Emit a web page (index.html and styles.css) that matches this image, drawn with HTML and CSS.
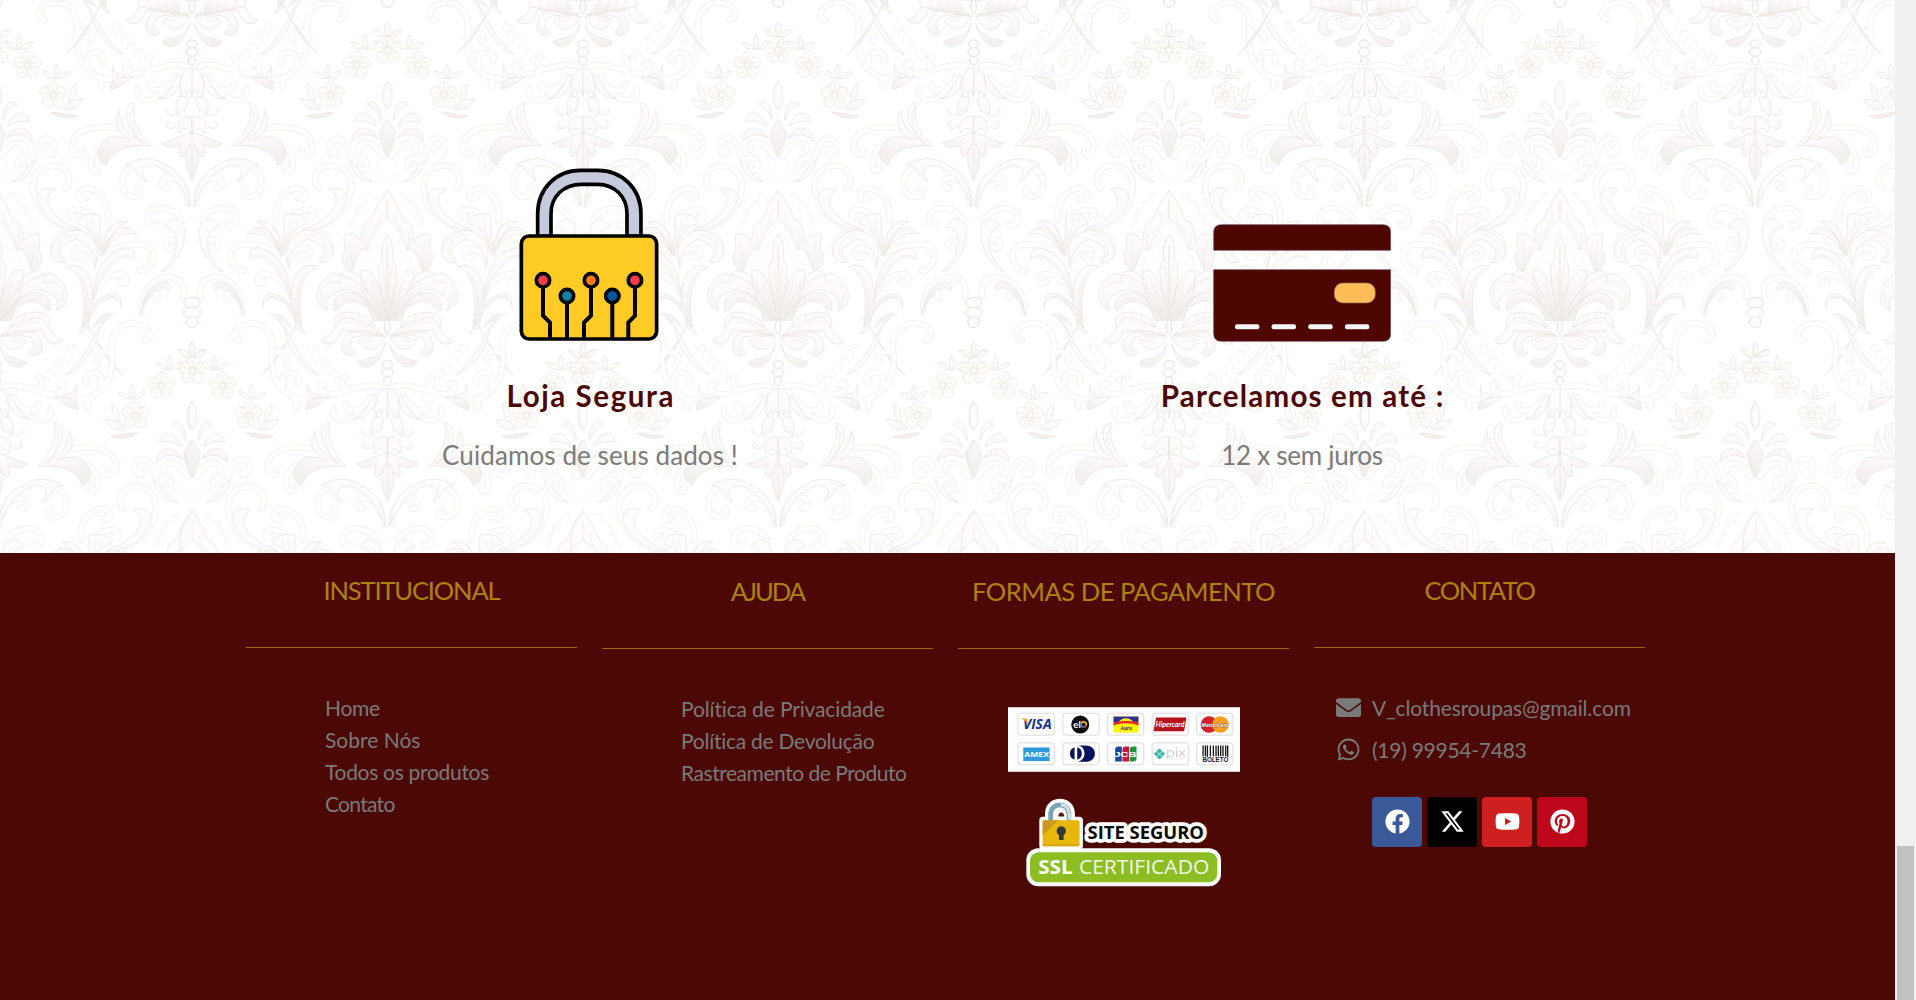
FILE: index.html
```html
<!DOCTYPE html>
<html lang="pt-BR">
<head>
<meta charset="utf-8">
<title>V Clothes</title>
<link rel="stylesheet" href="styles.css">
</head>
<body>
<div class="page">
<section class="features">
  <svg class="damask" aria-hidden="true">
    <defs>
      <linearGradient id="shade" x1="0" y1="0" x2="0.3" y2="1"><stop offset="0" stop-color="#fefdfb"/><stop offset="0.6" stop-color="#fdfcfa"/><stop offset="1" stop-color="#f3f0ee"/></linearGradient>
      <g id="flower">
        <g fill="#fefdfa" stroke="#ece8e4" stroke-width="2.5">
          <circle cx="0" cy="-25" r="16"/><circle cx="24" cy="-8" r="16"/><circle cx="15" cy="21" r="16"/><circle cx="-15" cy="21" r="16"/><circle cx="-24" cy="-8" r="16"/>
          <circle r="8"/><path d="M0-8V-30M8-3L28-9M5 6L17 24M-5 6L-17 24M-8-3L-28-9"/>
        </g>
      </g>
      <g id="sprig" fill="#fefdfa" stroke="#e8e3df" stroke-width="2.5"><path d="M0 0C-12-15-6-32 0-42C6-32 12-15 0 0ZM-5 2C-14-16-30-20-42-18C-36-4-22 2-5 2ZM5 2C14-16 26-20 38-22C34-6 20 4 5 2Z"/></g>
      <g id="curls">
        <path d="M365 105C352 40 390 5 430 8C480 14 490 54 460 60M365 130C372 100 350 88 330 97C315 103 313 118 322 126M265 240C325 232 362 190 364 130M330 196C340 168 322 152 300 158C280 166 280 180 288 184M140 210C180 230 222 222 220 196C218 184 206 186 206 194M40 198C90 185 120 215 142 205C160 190 156 172 142 170M70 230C90 280 150 280 144 250M100 270C120 310 190 310 180 265M262 236C290 232 300 255 288 262"/>
        <path d="M245 385C330 370 378 400 378 440C376 470 345 470 349 449M285 430C315 450 325 470 320 495C322 515 295 520 300 500M180 495C235 505 245 585 195 590C170 592 168 570 180 566M30 610C30 550 60 535 95 532C118 545 105 575 90 562M50 665C55 625 150 600 152 660C150 680 128 682 124 672M56 740C58 715 98 710 96 736C94 750 82 748 80 742M45 890C30 830 90 825 110 835C150 850 170 890 170 935M122 895C120 870 145 870 165 905M270 660C265 580 325 555 350 570C370 590 350 605 338 595M318 650C350 620 390 625 384 648C378 655 370 650 370 646M398 565C370 530 405 490 440 498C490 500 505 550 490 590C475 650 410 685 360 690M360 698C420 690 445 730 430 765C420 780 405 780 405 780M310 780C320 745 375 730 372 762C368 775 350 775 348 768M175 810C160 820 130 790 136 755C145 725 215 725 285 760M235 845C225 855 210 850 216 830C230 810 290 830 312 880M435 460C455 470 460 455 450 450C425 460 420 415 460 415C480 420 490 460 505 495M505 495C505 465 545 465 543 500C540 520 520 510 520 500M520 450C510 425 560 410 590 470"/>
      </g>
      <g id="leaves">
        <path d="M30 45C60 15 110-5 150-10C175 10 180 50 216 60C205 80 165 75 155 30ZM30 45C80 25 140 20 155 70C160 110 120 115 115 95C130 90 140 70 120 50C80 42 60 42 30 45ZM25 50C50 100 90 95 105 60C80 45 50 45 25 50ZM25 70C40 120 80 110 108 125C95 150 45 150 25 70Z"/>
        <path d="M350-5C310 20 310 90 225 163C260 155 310 95 320 50C325 20 340 10 350-5ZM298-5C290 15 275 25 263 40C280 38 295 20 298-5ZM350 958C310 983 310 1053 225 1126"/>
        <path d="M195 232C230 225 270 240 262 268C240 265 215 245 195 232ZM225 222C240 225 258 210 255 195C265 230 240 240 215 232Z"/>
        <path d="M142 438C175 410 205 350 190 308C230 310 225 380 165 430C210 400 240 370 235 330C255 365 245 400 200 420C240 405 275 405 285 430C310 450 300 490 275 495C260 450 215 430 142 438Z"/>
        <path d="M100 495C130 470 180 470 218 495C185 490 180 540 155 545C185 505 155 490 120 500C70 520 45 570 24 620C28 560 45 515 100 495Z"/>
        <path d="M105 813C60 790 35 730 40 680C55 650 85 650 100 682C55 680 45 760 110 813ZM172 945C170 890 140 850 110 848C85 842 75 860 88 872C105 850 150 870 172 945Z"/>
        <path d="M185 702C200 675 260 660 285 765C255 705 215 695 185 702ZM215 665C255 655 275 690 285 740C300 700 290 670 296 645C330 635 365 650 360 672C320 680 300 730 292 768C270 730 250 680 215 665Z"/>
        <path d="M310 805C295 750 300 710 360 690C410 690 445 730 440 760C435 785 415 790 400 785C430 760 400 725 365 718C325 730 305 770 310 805ZM192 778C185 755 200 740 225 745C280 765 312 815 315 900C285 800 225 750 192 778ZM318 915C305 840 340 780 395 800C350 820 330 870 348 985C320 950 325 940 290 905C260 880 225 900 232 925C225 870 260 865 318 915Z"/>
        <path d="M430 568C460 555 490 575 482 600C470 650 420 690 350 692C410 670 490 610 430 568ZM510 495C520 520 545 540 560 545C525 545 495 515 490 480ZM250 943C290 935 305 965 318 985"/>
        <path d="M603 573C625 600 635 620 640 650V690L603 655C575 680 555 710 545 750C530 735 515 760 500 810C480 820 465 780 470 760C485 765 470 700 478 702C500 700 520 710 525 725C528 690 535 660 550 665C570 640 560 630 603 573Z"/>
        <path d="M585 360C585 320 565 290 542 313C565 320 575 335 585 360ZM570 378C560 340 515 320 507 365C530 360 550 365 570 378ZM575 415C550 370 500 375 497 425C515 405 545 395 575 415ZM603 245C620 265 620 310 603 328C586 310 586 265 603 245ZM603 360L626 400C620 440 610 450 603 470C596 450 586 440 580 400Z"/>
        <path d="M425 930C380 920 380 850 440 820C500 830 545 850 600 965C540 900 500 860 470 870C420 890 415 900 425 930ZM445 930C430 890 480 865 520 885C560 910 575 940 590 965C540 900 480 890 465 920ZM560 960C540 890 520 850 525 810C560 800 590 860 600 960ZM603 705C615 720 620 750 615 780C640 800 625 850 603 960C580 850 565 800 590 780C585 750 590 720 603 705ZM465 850C440 800 530 790 545 880"/>
        <path d="M18 205C45 200 60 240 52 290C45 275 40 250 35 285C30 270 28 250 18 290ZM60 225C75 245 85 290 120 295C95 300 55 280 50 230ZM30 295C60 270 75 320 60 350C50 340 45 320 40 335ZM20 350C45 340 70 370 55 400C45 380 30 380 20 400ZM20 400C60 405 70 420 110 430C90 450 60 440 50 430C60 450 60 470 45 470C35 450 25 440 20 420ZM18 430C40 445 45 490 18 540ZM55 330C75 360 100 345 96 325M65 380C100 400 100 365 85 362"/>
        <path d="M345 298C370 295 400 310 405 325C380 335 355 325 345 298ZM365 250C385 265 390 290 385 305C370 300 362 270 365 250ZM362 347C390 350 410 335 442 338C420 350 390 362 362 347Z"/>
        <path d="M445 980C430 930 500 925 545 955C570 975 570 990 560 1000Z"/>
      </g>
      <g id="motif" stroke-linejoin="round" stroke-linecap="round">
        <use href="#curls" fill="none" stroke="#f1eeeb" stroke-width="19"/>
        <use href="#curls" fill="none" stroke="#fefefc" stroke-width="14.5"/>
        <use href="#leaves" fill="url(#shade)" stroke="#e9e5e1" stroke-width="2.5"/>
        <g fill="none" stroke="#f1ece7" stroke-width="2.5">
          <path d="M150 178C160 160 180 165 175 185M165 160C175 140 195 150 190 170M188 138C198 118 218 130 212 148M205 118C215 98 233 110 228 128M220 98C230 80 247 90 243 108M235 80C245 62 262 72 256 90M500 680C490 670 500 655 510 665M505 655C500 640 512 630 520 645M515 635C510 620 522 612 530 625M525 615C525 600 540 595 543 608M545 595C545 575 565 575 565 590"/>
          <path d="M45 45C80 30 120 20 145 40M60 50C80 70 90 65 95 58M65 30C100 10 130 0 150 5M55 120C70 130 85 132 98 128M195 325C215 350 200 395 165 428M225 350C235 370 220 400 190 420M180 440C220 440 250 450 270 480M260 675C275 690 285 720 287 750M310 660C330 655 300 710 292 750M330 655C350 660 310 700 295 755M205 690C230 685 260 705 280 745M205 765C240 760 290 800 310 870M365 815C335 840 325 890 335 950M245 890C270 885 300 905 315 925M370 705C405 705 425 735 420 765M410 900C390 860 430 840 460 845M460 905C480 885 520 900 560 945M560 850L590 940M603 740V950M590 800C600 840 598 880 603 940M615 800C606 840 606 880 603 940M603 600V655M580 640C590 660 570 680 555 700M540 700C535 720 540 735 545 745M490 720L500 795"/>
          <path d="M450 930C470 940 475 970 480 990M490 935C500 950 505 970 505 990M520 945L530 990"/>
        </g>
        <g fill="none" stroke="#eee9e4" stroke-width="3" stroke-dasharray="0 11"><path d="M585 690L540 760L510 830M590 705L555 760L520 800M510 760V800M560 790L530 770M575 730V770M500 820L480 840M555 505L600 545M560 520H600M575 490V540"/></g>
        <g fill="#fefdfb" stroke="#e6e1dc" stroke-width="2.5"><ellipse cx="18" cy="132" rx="15" ry="12"/><ellipse cx="18" cy="156" rx="17" ry="13"/><ellipse cx="18" cy="182" rx="11" ry="13"/><ellipse cx="18" cy="908" rx="24" ry="16"/><ellipse cx="18" cy="938" rx="26" ry="16"/><ellipse cx="18" cy="966" rx="17" ry="17"/><ellipse cx="18" cy="20" rx="8" ry="22"/></g>
        <use href="#flower" x="603" y="150"/><use href="#flower" x="512" y="195"/><use href="#flower" x="435" y="285"/>
        <use href="#sprig" x="603" y="108"/><use href="#sprig" x="538" y="146"/><use href="#sprig" x="425" y="234"/>
      </g>
      <g id="pair">
        <use href="#motif" transform="scale(.3333) translate(-18 0)"/>
        <use href="#motif" transform="scale(-.3333 .3333) translate(-18 0)"/>
      </g>
      <pattern id="wallpaper" width="390.8" height="640.8" patternUnits="userSpaceOnUse" patternTransform="translate(-3.4 0)">
        <use href="#pair" x="195.4"/>
        <use href="#pair" x="0" y="320.4"/><use href="#pair" x="390.8" y="320.4"/>
        <use href="#pair" x="0" y="-320.4"/><use href="#pair" x="390.8" y="-320.4"/>
        <use href="#pair" x="195.4" y="640.8"/>
      </pattern>
    </defs>
    <rect width="100%" height="100%" fill="url(#wallpaper)"/>
  </svg>
  <div class="feature">
    <svg class="lock" viewBox="110 50 430 525" stroke="#000" stroke-width="11">
      <path d="M172 258V190C172 115 228 60 300 60H352C425 60 482 115 482 190V258H440V190C440 138 402 102 352 102H303C250 102 212 138 212 190V258Z" fill="#c5cadd"/>
      <rect x="123" y="257" width="406" height="309" rx="23" fill="#ffcb24"/>
      <path d="M188 412V496L209 517V566M260 460V566M332 412V496L311 517V566M396 460V566M464 412V496L444 517V566" fill="none" stroke-width="12"/>
      <circle cx="188" cy="390" r="20" fill="#ff3c4c"/><circle cx="260" cy="437" r="20" fill="#14829e"/><circle cx="332" cy="390" r="20" fill="#ff7b1c"/><circle cx="396" cy="437" r="20" fill="#00599c"/><circle cx="464" cy="390" r="20" fill="#ff3c4c"/>
    </svg>
    <h2><span class="track-wide">Loja Segura</span></h2>
    <p><span class="track-loose">Cuidamos de seus dados !</span></p>
  </div>
  <div class="feature">
    <svg class="card" viewBox="218 -101 535 525">
      <g fill="#4f0600" stroke="#604a5a" stroke-width="2"><path d="M220 149V95Q220 72 243 72H728Q751 72 751 95V149ZM220 207H751V399Q751 422 728 422H243Q220 422 220 399Z"/></g>
      <rect x="582" y="247" width="123" height="60" rx="25" fill="#ffbd57" stroke="#8b6a50" stroke-width="2"/>
      <g fill="#f4f4f6"><rect x="284" y="371" width="73" height="15" rx="6"/><rect x="394" y="371" width="73" height="15" rx="6"/><rect x="504" y="371" width="73" height="15" rx="6"/><rect x="614" y="371" width="73" height="15" rx="6"/></g>
    </svg>
    <h2><span class="track-mid">Parcelamos em até :</span></h2>
    <p><span class="track-snug">12 x sem juros</span></p>
  </div>
</section>
<footer class="footer">
  <div class="col">
    <h3><span class="title-institutional">INSTITUCIONAL</span></h3>
    <ul class="links"><li><span class="track-snug">Home</span></li><li>Sobre Nós</li><li><span class="track-tight">Todos os produtos</span></li><li><span class="track-tighter">Contato</span></li></ul>
  </div>
  <div class="col low">
    <h3><span class="title-help">AJUDA</span></h3>
    <ul class="links"><li><span class="track-hair">Política de Privacidade</span></li><li><span class="track-snug">Política de Devolução</span></li><li><span class="track-close">Rastreamento de Produto</span></li></ul>
  </div>
  <div class="col low">
    <h3><span class="track-close">FORMAS DE PAGAMENTO</span></h3>
    <svg class="payments" viewBox="52 50 697 194">
      <rect x="52" y="50" width="697" height="194" fill="#fff"/>
      <g fill="#fff" stroke="#d3d3d6" stroke-width="2.5"><rect x="82" y="68" width="109" height="66" rx="9"/><rect x="217" y="68" width="109" height="66" rx="9"/><rect x="351" y="68" width="109" height="66" rx="9"/><rect x="485" y="68" width="109" height="66" rx="9"/><rect x="619" y="68" width="109" height="66" rx="9"/><rect x="82" y="157" width="109" height="66" rx="9"/><rect x="217" y="157" width="109" height="66" rx="9"/><rect x="351" y="157" width="109" height="66" rx="9"/><rect x="485" y="157" width="109" height="66" rx="9"/><rect x="619" y="157" width="109" height="66" rx="9"/></g>
      <text x="97" y="115" class="visa" textLength="86" lengthAdjust="spacingAndGlyphs">VISA</text><path d="M91 84H108L113 102C107 93 100 88 91 84Z" fill="#f5a21b"/>
      <circle cx="269" cy="102" r="27" fill="#0b0b12"/><text x="248" y="111" class="elo">el</text>
      <g fill="none" stroke-width="5"><path d="M272 99A8 8 0 0 1 280 94" stroke="#ffcb05"/><path d="M280 94A8 8 0 0 1 287 104" stroke="#ffcb05"/><path d="M287 104A8 8 0 0 1 279 110" stroke="#ef4123"/><path d="M272 99A8 8 0 0 0 279 110" stroke="#00a4e0"/></g>
      <rect x="369" y="78" width="75" height="48" fill="#fff200"/><path d="M369 78H444V96H369Z" fill="#2c2f9b"/><path d="M383 98C390 78 423 78 430 98Z" fill="#ffe600"/><path d="M369 96C390 90 423 90 444 96V105C420 96 393 96 369 105Z" fill="#e52a26"/><text x="407" y="118" class="aura">Aura</text>
      <path d="M497 81H588L581 122H489Z" fill="#b5121b"/><text x="496" y="108" class="hiper" textLength="86" lengthAdjust="spacingAndGlyphs">Hipercard</text>
      <circle cx="656" cy="102" r="25" fill="#d5202a"/><circle cx="690" cy="102" r="25" fill="#f99f1f"/><text x="633" y="108" class="master" textLength="81" lengthAdjust="spacingAndGlyphs">MasterCard</text>
      <rect x="98" y="171" width="79" height="41" fill="#2d9bdb"/><text x="101" y="200" class="amex" textLength="74" lengthAdjust="spacingAndGlyphs">AMEX</text>
      <path d="M256 165H286C322 165 322 214 286 214H256Z" fill="#02145c"/><circle cx="256" cy="189" r="26" fill="#fff"/><path d="M252 170A20 20 0 0 0 252 208ZM260 170A20 20 0 0 1 260 208Z" fill="#02145c"/>
      <path d="M374 178Q374 168 384 168H394V213H374Z" fill="#17489f"/><path d="M396 178Q396 168 406 168H416V213H396Z" fill="#c31a3c"/><path d="M418 178Q418 168 428 168H438V203Q438 213 428 213H418Z" fill="#1b9638"/><text x="371" y="199" class="jcb" textLength="67" lengthAdjust="spacingAndGlyphs">JCB</text>
      <path d="M507 175L522 190L507 206L492 190Z" fill="#35b9ab" stroke="#35b9ab" stroke-width="3" stroke-linejoin="round"/><path d="M498 182L507 190L516 182M498 199L507 190L516 199" fill="none" stroke="#fff" stroke-width="2"/><text x="527" y="199" class="pix" textLength="59" lengthAdjust="spacingAndGlyphs">pix</text><path d="M536 205H583" stroke="#d2d2d2" stroke-width="2" stroke-dasharray="3 2"/>
      <path d="M638 165V200M645 165V200M651 165V200M660 165V200M669 165V200M677 165V200M684 165V200M691 165V200M698 165V200M706 165V200M712 165V200" stroke="#17171f" stroke-width="4"/><text x="636" y="216" class="boleto" textLength="78" lengthAdjust="spacingAndGlyphs">BOLETO</text>
    </svg>
    <svg class="ssl" viewBox="104 320 592 270">
      <g fill="#fff" stroke="#fff" stroke-width="22" stroke-linejoin="round"><path d="M158 390H175V370C175 325 243 325 243 370V390H267V467H158Z"/></g>
      <text x="292" y="446" class="site" textLength="350" lengthAdjust="spacingAndGlyphs">SITE SEGURO</text>
      <rect x="108" y="474" width="585" height="114" rx="36" fill="#fff"/><rect x="119" y="486" width="563" height="90" rx="26" fill="#8cbd22"/>
      <path d="M181 392V372C181 334 236 334 236 372V392" fill="none" stroke="#79a4b2" stroke-width="14"/><path d="M212 343C230 344 238 356 238 388" fill="none" stroke="#d5e2e6" stroke-width="9"/>
      <path d="M198 392V374C198 358 228 358 228 374V392Z" fill="#fff"/><path d="M204 378C204 362 222 362 222 378Z" fill="#4c1a16"/>
      <rect x="157" y="390" width="111" height="78" rx="6" fill="#e8b70b"/><path d="M157 396Q157 390 163 390H205L157 435Z" fill="#c79a20"/><path d="M157 461V466Q158 468 163 468H262Q268 468 268 461Z" fill="#d9a90b"/>
      <path d="M213 408A14 14 0 0 1 220 434V449H206V434A14 14 0 0 1 213 408Z" fill="#363636"/>
      <text x="144" y="552" class="sslb" textLength="103" lengthAdjust="spacingAndGlyphs">SSL</text><text x="266" y="552" class="cert" textLength="392" lengthAdjust="spacingAndGlyphs">CERTIFICADO</text>
    </svg>
  </div>
  <div class="col">
    <h3><span class="title-contact">CONTATO</span></h3>
    <ul class="contact">
      <li><svg viewBox="0 0 512 512"><path d="M502.300 190.800c3.900-3.100 9.700-.2 9.700 4.700V400c0 26.500-21.500 48-48 48H48c-26.500 0-48-21.500-48-48V195.600c0-5 5.700-7.800 9.700-4.700 22.400 17.400 52.100 39.500 154.100 113.600 21.100 15.400 56.700 47.800 92.200 47.600 35.700.3 72-32.800 92.300-47.600 102-74.100 131.600-96.300 154-113.700zM256 320c23.200.4 56.600-29.200 73.400-41.400 132.700-96.300 142.800-104.700 173.400-128.700 5.800-4.500 9.200-11.500 9.200-18.900v-19c0-26.500-21.500-48-48-48H48c-26.500 0-48 21.500-48 48v19c0 7.400 3.400 14.300 9.200 18.900 30.600 23.900 40.700 32.400 173.400 128.700 16.800 12.200 50.200 41.800 73.400 41.400z"/></svg><span class="track-hair">V_clothesroupas@gmail.com</span></li>
      <li><svg viewBox="-32 0 512 512"><path d="M380.900 97.100C339 55.100 283.200 32 223.900 32c-122.400 0-222 99.600-222 222 0 39.100 10.200 77.300 29.600 111L0 480l117.700-30.900c32.400 17.700 68.900 27 106.100 27h.1c122.300 0 224.100-99.600 224.100-222 0-59.300-25.200-115-67.100-157zm-157 341.600c-33.200 0-65.700-8.900-94-25.700l-6.700-4-69.800 18.300L72 359.200l-4.400-7c-18.500-29.400-28.200-63.300-28.200-98.200 0-101.700 82.800-184.500 184.600-184.500 49.300 0 95.600 19.200 130.400 54.100 34.800 34.900 56.200 81.200 56.100 130.500 0 101.800-84.900 184.600-186.600 184.600zm101.200-138.200c-5.500-2.800-32.800-16.200-37.900-18-5.100-1.900-8.800-2.800-12.500 2.800-3.700 5.600-14.300 18-17.600 21.800-3.200 3.700-6.500 4.200-12 1.400-32.600-16.300-54-29.100-75.500-66-5.700-9.800 5.700-9.100 16.300-30.300 1.800-3.700.9-6.900-.5-9.700-1.400-2.800-12.500-30.100-17.100-41.200-4.500-10.800-9.100-9.300-12.500-9.500-3.200-.2-6.900-.2-10.600-.2-3.700 0-9.700 1.400-14.800 6.900-5.100 5.600-19.400 19-19.400 46.300 0 27.300 19.900 53.700 22.600 57.400 2.800 3.700 39.100 59.700 94.800 83.800 35.200 15.200 49 16.500 66.600 13.900 10.700-1.600 32.800-13.400 37.400-26.400 4.600-13 4.600-24.100 3.200-26.400-1.300-2.500-5-3.900-10.500-6.600z"/></svg><span class="track-snug">(19) 99954-7483</span></li>
    </ul>
    <div class="social">
      <a class="fb"><svg viewBox="0 0 512 512"><path d="M504 256C504 119 393 8 256 8S8 119 8 256c0 123.800 90.700 226.400 209.300 245V327.700h-63V256h63v-54.600c0-62.200 37-96.500 93.700-96.500 27.100 0 55.500 4.800 55.500 4.800v61h-31.300c-30.800 0-40.400 19.100-40.400 38.700V256h68.800l-11 71.700h-57.800V501C413.300 482.400 504 379.800 504 256z"/></svg></a>
      <a class="x"><svg viewBox="0 0 512 512"><path d="M389.200 48h70.600L305.600 224.200 487 464H345L233.700 318.600 106.500 464H35.800L200.700 275.500 26.800 48H172.400L272.900 180.900 389.200 48zM364.400 421.800h39.100L151.100 88h-42L364.400 421.800z"/></svg></a>
      <a class="yt"><svg viewBox="32 0 512 512"><path d="M549.700 124.100c-6.300-23.700-24.800-42.300-48.300-48.600C458.800 64 288 64 288 64S117.200 64 74.600 75.500c-23.500 6.300-42 24.900-48.300 48.600-11.400 42.900-11.400 132.300-11.400 132.300s0 89.400 11.400 132.300c6.300 23.700 24.800 41.500 48.300 47.800C117.200 448 288 448 288 448s170.800 0 213.400-11.500c23.500-6.300 42-24.200 48.300-47.800 11.400-42.900 11.400-132.300 11.400-132.300s0-89.400-11.400-132.300zM232.200 337.600V175.200l142.700 81.200-142.700 81.200z" transform="translate(32 28) scale(.89)"/></svg></a>
      <a class="pin"><svg viewBox="-8 0 512 512"><path d="M496 256c0 137-111 248-248 248-25.600 0-50.200-3.900-73.400-11.100 10.100-16.500 25.200-43.500 30.800-65 3-11.600 15.400-59 15.400-59 8.100 15.400 31.700 28.500 56.800 28.500 74.800 0 128.700-68.800 128.700-154.300 0-81.900-66.900-143.200-152.900-143.200-107 0-163.900 71.800-163.900 150.100 0 36.400 19.400 81.700 50.300 96.100 4.700 2.200 7.200 1.200 8.300-3.300.8-3.400 5-20.300 6.900-28.100.6-2.500.3-4.700-1.700-7.100-10.100-12.500-18.300-35.300-18.300-56.600 0-54.700 41.400-107.600 112-107.600 60.900 0 103.600 41.500 103.600 100.900 0 67.100-33.900 113.600-78 113.600-24.300 0-42.600-20.100-36.700-44.800 7-29.500 20.500-61.300 20.500-82.600 0-19-10.200-34.900-31.400-34.900-24.900 0-44.900 25.700-44.900 60.200 0 22 7.400 36.800 7.400 36.800s-24.500 103.800-29 123.200c-5 21.400-3 51.600-.9 71.200C65.400 450.900 0 361.100 0 256 0 119 111 8 248 8s248 111 248 248z"/></svg></a>
    </div>
  </div>
</footer>
</div>
<div class="scrollbar"><div class="thumb"></div></div>
</body>
</html>
```
FILE: styles.css
```css
* { box-sizing: border-box; }
body { margin: 0; height: 1000px; overflow: hidden; display: flex; font-family: Lato, "Open Sans", sans-serif; background: #fff; }
h2, h3, p, ul { margin: 0; padding: 0; white-space: nowrap; }
ul { list-style: none; }
svg { display: block; }
.page { width: 1895px; height: 1000px; display: flex; flex-direction: column; }
.scrollbar { width: 21px; background: #f0f0f0; padding: 846px 2px 0; }
.thumb { height: 154px; background: #c1c1c1; }

.track-wide { letter-spacing: 1.600px; margin-right: -1.600px; }
.track-mid { letter-spacing: 1.200px; margin-right: -1.200px; }
.track-loose { letter-spacing: .1px; }
.track-hair { letter-spacing: -.14px; }
.track-snug { letter-spacing: -.26px; }
.track-tight { letter-spacing: -.3px; }
.track-close { letter-spacing: -.46px; }
.track-tighter { letter-spacing: -.7px; }
.title-institutional { letter-spacing: -1.150px; }
.title-help { letter-spacing: -1.900px; }
.title-contact { letter-spacing: -1.450px; }

.features { position: relative; height: 553px; display: flex; padding: 167px 237px 0 234px; background: #fff; }
.damask { position: absolute; inset: 0; width: 100%; height: 100%; }
.feature { position: relative; flex: 1; display: flex; flex-direction: column; align-items: center; }
.lock { width: 143.300px; height: 175px; margin-right: 3px; }
.card { width: 178.300px; height: 175px; }
h2 { font-size: 29.500px; line-height: 36px; font-weight: 700; color: #4c0805; margin-top: 36px; }
.feature p { font-size: 26px; line-height: 36px; color: #7a7a7a; margin-top: 23px; }

.footer { flex: 1; display: grid; grid-template-columns: repeat(4, 331px); column-gap: 25px; padding-left: 246px; background: #4c0805; }
.low { padding-top: 1px; }
h3 { height: 95px; padding-top: 20px; border-bottom: 1px solid #9c6a08; text-align: center; font-size: 25.500px; line-height: 34px; font-weight: 400; color: #ad820e; }
.links { padding: 44px 0 0 79px; font-size: 21px; line-height: 32px; color: #7a7a7a; }
.payments { width: 232px; height: 65px; margin: 58px auto 0; }
.ssl { width: 197px; height: 90px; margin: 25px auto 0; }
.visa { font: italic 700 43px "Open Sans", sans-serif; fill: #1b2f8f; }
.elo { font: 700 29px Lato, sans-serif; fill: #fff; }
.aura { font: italic 700 17px "Liberation Serif", serif; fill: #26306e; text-anchor: middle; }
.hiper { font: italic 700 20px Lato, sans-serif; fill: #fff; }
.master { font: italic 700 17px "Open Sans", sans-serif; fill: #fff; stroke: #3b1520; stroke-width: 1.500px; paint-order: stroke; }
.amex { font: 700 22px "Open Sans", sans-serif; fill: #fff; }
.jcb { font: 700 23px "Liberation Sans", sans-serif; fill: #fff; }
.pix { font: 300 40px Lato, sans-serif; fill: #b3b6b8; }
.boleto { font: 700 19px "Liberation Sans", sans-serif; fill: #17171f; stroke: #fff; stroke-width: 4px; paint-order: stroke; }
.site { font: 700 53px "Open Sans", sans-serif; fill: #0a0a0a; stroke: #fff; stroke-width: 22px; stroke-linejoin: round; paint-order: stroke; }
.sslb { font: 700 61px "Open Sans", sans-serif; fill: #fff; }
.cert { font: 400 61px "Open Sans", sans-serif; fill: #f4f9e8; }

.contact { padding: 43px 0 0 22px; font-size: 21px; color: #7a7a7a; display: grid; row-gap: 10px; }
.contact li { display: flex; align-items: center; height: 32px; gap: 11px; }
.contact svg { width: 25px; height: 25px; fill: #7a7a7a; }
.social { display: flex; gap: 5px; padding: 31.500px 0 0 58px; }
.social a { width: 50px; height: 50px; border-radius: 4px; display: flex; align-items: center; justify-content: center; }
.social svg { width: 25px; height: 25px; fill: #fff; }
.fb { background: #3b5998; }
.x { background: #000; }
.yt { background: #cd201f; }
.pin { background: #bd081c; }
```
